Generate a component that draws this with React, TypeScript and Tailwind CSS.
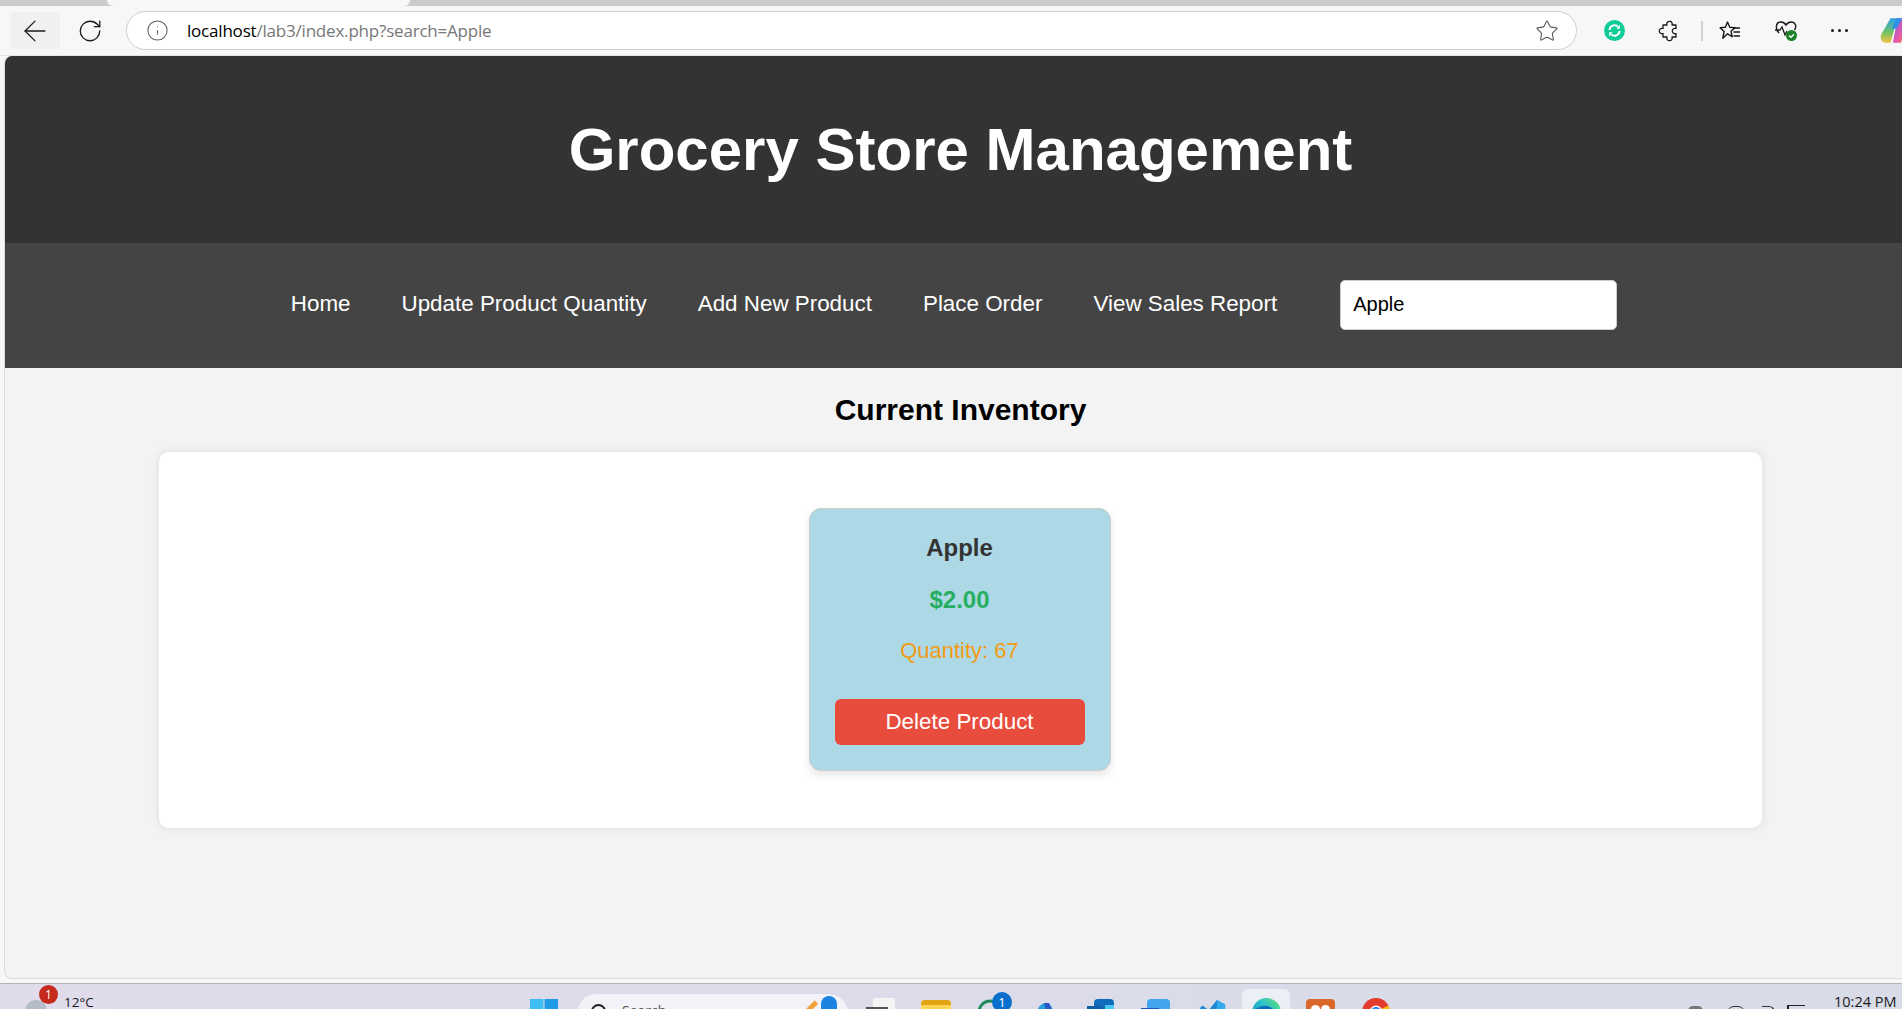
import React from "react";
import { ArrowLeft, Info, RotateCw, Star } from "lucide-react";

const navLinks = ["Home", "Update Product Quantity", "Add New Product", "Place Order", "View Sales Report"];

const BrowserBar: React.FC = () => (
  <div className="shrink-0">
    <div className="flex h-[6px] bg-[#cbcbcb]">
      <div className="ml-[107px] h-full w-[303px] rounded-b-lg bg-[#f7f7f7]" />
    </div>
    <div className="flex h-[50px] items-center border-b border-[#e4e4e4] bg-[#f7f7f7] pb-[5px] pt-[5px]">
      <div className="ml-[10px] flex h-[37px] w-[50px] shrink-0 items-center justify-center rounded bg-[#f0f0f0]">
        <ArrowLeft className="h-[34px] w-[34px] text-[#1a1a1a]" strokeWidth={0.9} />
      </div>
      <RotateCw className="ml-[17px] h-[26px] w-[26px] shrink-0 text-[#1a1a1a]" strokeWidth={1.2} />
      <div className="ml-[23px] flex h-[39px] w-[1451px] shrink-0 items-center rounded-full border border-[#cfcfcf] bg-white">
        <Info className="ml-[19px] h-[23px] w-[23px] text-[#606060]" strokeWidth={1.1} />
        <span className="ml-[18px] font-['Open_Sans',sans-serif] text-[17px] tracking-[-0.2px] text-[#777]">
          <span className="text-black">localhost</span>/lab3/index.php?search=Apple
        </span>
        <Star className="ml-auto mr-[17px] h-[24px] w-[24px] text-[#5c5c5c]" strokeWidth={1.1} />
      </div>
      <svg className="ml-[27px] shrink-0" width="21" height="21" viewBox="0 0 21 21">
        <circle cx="10.5" cy="10.5" r="10.5" fill="#0fcb97" />
        <path d="M5.5 10a5 5 0 0 1 8.2-3.6M15.5 11a5 5 0 0 1-8.2 3.6" fill="none" stroke="#fff" strokeWidth="2" />
        <path d="M12.5 9l3.6-.6-.4-3.8zM8.5 12l-3.6.6.4 3.8z" fill="#fff" />
      </svg>
      <svg className="ml-[33px] shrink-0" width="23" height="23" viewBox="0 0 23 23">
        <path
          d="M5 6H9A2.700 2.700 0 1 1 14 6H18V9.500A2.700 2.700 0 1 0 18 14.500V18H14A2.700 2.700 0 1 1 9 18H5V14.500A2.700 2.700 0 1 1 5 9.500Z"
          fill="none"
          stroke="#1a1a1a"
          strokeWidth="1.3"
          strokeLinejoin="round"
        />
      </svg>
      <div className="ml-[20px] h-[20px] w-[2px] shrink-0 bg-[#cfcfcf]" />
      <svg className="ml-[15px] shrink-0" width="24" height="22" viewBox="0 0 24 22">
        <path
          d="M9.500 2l2.300 5.200 5.200.5-4 3.600 1.200 5.400-4.700-2.900-4.700 4.500 1.300-6.800-4-3.800 5.300-.5z"
          fill="none"
          stroke="#1a1a1a"
          strokeWidth="1.400"
          strokeLinejoin="round"
        />
        <path d="M15 8h7M15.500 12h6.500M15.500 16h6.500" stroke="#1a1a1a" strokeWidth="1.300" />
      </svg>
      <svg className="ml-[32px] shrink-0" width="24" height="24" viewBox="0 0 24 24">
        <path
          d="M5 14C1 10 1.500 3 7 3c2.500 0 4 1.500 5 3 1-1.500 2.500-3 5-3 4.500 0 6 4.500 3.500 8"
          fill="none"
          stroke="#1a1a1a"
          strokeWidth="1.400"
        />
        <path d="M1 11h5l2-3 3 8 2-4" fill="none" stroke="#1a1a1a" strokeWidth="1.300" />
        <circle cx="17.500" cy="16.500" r="5.500" fill="#1d7f26" />
        <path d="M15 16.500l2 1.800 3-3" fill="none" stroke="#fff" strokeWidth="1.400" />
      </svg>
      <div className="ml-[33px] flex shrink-0 gap-[4px]">
        <span className="h-[3px] w-[3px] rounded-full bg-[#1a1a1a]" />
        <span className="h-[3px] w-[3px] rounded-full bg-[#1a1a1a]" />
        <span className="h-[3px] w-[3px] rounded-full bg-[#1a1a1a]" />
      </div>
      <svg className="ml-[32px] shrink-0" width="28" height="28" viewBox="0 0 24 24">
        <defs>
          <linearGradient id="copilotA" x1="0" y1="0" x2="0" y2="1">
            <stop offset="0" stopColor="#2aa0e8" />
            <stop offset="0.55" stopColor="#6cc36a" />
            <stop offset="1" stopColor="#f2c23e" />
          </linearGradient>
          <linearGradient id="copilotB" x1="0" y1="0" x2="1" y2="1">
            <stop offset="0" stopColor="#7b5cf0" />
            <stop offset="0.6" stopColor="#e85aa8" />
            <stop offset="1" stopColor="#f57c3a" />
          </linearGradient>
        </defs>
        <path d="M9 1h6L9 22H5C1 22 0 18 1 15z" fill="url(#copilotA)" />
        <path d="M15 1h3c4 0 5 4 5 7l-5 14h-7z" fill="url(#copilotB)" />
        <path d="M14 1h5l-5 9H10z" fill="#2e8fe6" />
      </svg>
    </div>
  </div>
);

const WindowsLogo = () => (
  <svg width="28" height="28" viewBox="0 0 28 28">
    <rect x="0" y="0" width="13.500" height="13.500" fill="#3dbdf2" />
    <rect x="14.500" y="0" width="13.500" height="13.500" fill="#1f9be8" />
    <rect x="0" y="14.500" width="13.500" height="13.500" fill="#1f9be8" />
    <rect x="14.500" y="14.500" width="13.500" height="13.500" fill="#0a78d4" />
  </svg>
);

const Taskbar: React.FC = () => (
  <div className="flex h-[26px] shrink-0 overflow-hidden border-t border-[#b4b4c0] bg-gradient-to-r from-[#e0dcec] to-[#d8dbe8]">
    <div className="flex w-[530px] shrink-0">
      <div className="relative ml-[25px] mt-[16px] h-[20px] w-[22px] rounded-t-full bg-[#b4bcc8]">
        <span className="absolute left-[14px] top-[-15px] flex h-[19px] w-[19px] items-center justify-center rounded-full bg-[#c42b1c] font-['Open_Sans',sans-serif] text-[12px] text-white">
          1
        </span>
      </div>
      <span className="ml-[17px] mt-[11px] font-['Open_Sans',sans-serif] text-[13.5px] leading-[14px] text-[#1a1a1a]">12°C</span>
    </div>
    <div className="mt-[15px]">
      <WindowsLogo />
    </div>
    <div className="relative ml-[19px] mt-[10px] h-[40px] w-[271px] rounded-full bg-[#f2f2f8]">
      <span className="absolute left-[14px] top-[10px] h-[15px] w-[15px] rounded-full border-2 border-[#222]" />
      <span className="absolute left-[45px] top-[8px] font-['Open_Sans',sans-serif] text-[14px] leading-[18px] text-[#555]">Search</span>
      <span className="absolute left-[232px] top-[6px] h-[14px] w-[5px] rotate-45 bg-[#f2a23c]" />
      <span className="absolute left-[244px] top-[2px] h-[20px] w-[16px] rounded-t-full bg-[#1b84e0]" />
    </div>
    <div className="relative ml-[25px] mt-[14px] h-[20px] w-[22px] shrink-0 bg-[#f4f4f4]">
      <span className="absolute left-[-7px] top-[9px] h-[8px] w-[22px] bg-[#555]" />
    </div>
    <div className="ml-[26px] mt-[16px] h-[20px] w-[30px] shrink-0 rounded-t-sm bg-gradient-to-b from-[#e0a412] from-[25%] to-[#fcd353] to-[25%]" />
    <svg className="ml-[26px] mt-[8px] shrink-0" width="38" height="30" viewBox="0 0 38 30">
      <circle cx="13" cy="20" r="11" fill="none" stroke="#1f8a5b" strokeWidth="3" />
      <circle cx="25" cy="10" r="10" fill="#0a6fcb" />
      <text x="25" y="14.500" textAnchor="middle" fontSize="13" fill="#fff" fontFamily="Open Sans">1</text>
    </svg>
    <svg className="ml-[18px] mt-[17px] shrink-0" width="27" height="24" viewBox="0 0 30 26">
      <path d="M2 24C2 10 8 2 14 2c5 0 8 4 10 14H10z" fill="#2a9fe0" />
      <path d="M12 2h6l4 12h-6z" fill="#2a56c8" />
      <circle cx="23" cy="14" r="5" fill="#a66ad8" />
    </svg>
    <div className="relative ml-[27px] mt-[15px] h-[20px] w-[27px] shrink-0">
      <div className="absolute left-[7px] top-0 h-[20px] w-[20px] rounded-t-sm bg-[#0f6cbd]" />
      <div className="absolute left-[18px] top-[6px] h-[20px] w-[9px] bg-[#49c5f1]" />
      <div className="absolute left-0 top-[7px] h-[20px] w-[15px] bg-[#0f5fa8]" />
    </div>
    <div className="relative ml-[27px] mt-[15px] h-[20px] w-[29px] shrink-0">
      <div className="absolute left-[6px] top-0 h-[20px] w-[23px] rounded-t-sm bg-[#41a5ee]" />
      <div className="absolute left-0 top-[9px] h-[20px] w-[18px] bg-[#185abd]" />
    </div>
    <svg className="ml-[27px] mt-[14px] shrink-0" width="29" height="24" viewBox="0 0 32 24">
      <path d="M22 1l9 5v18H22V12L9 24l-8-5 6-5-4-4 3-3 7 5z" fill="#1e88d8" />
      <path d="M22 1l9 5v18H22z" fill="#37a9ee" />
    </svg>
    <div className="ml-[16px] mt-[5px] flex h-[40px] w-[48px] shrink-0 justify-center rounded-md bg-[#edeff6] pt-[9px]">
      <svg width="29" height="29" viewBox="0 0 30 30">
        <defs>
          <linearGradient id="edgeRing" x1="0" y1="1" x2="1" y2="0">
            <stop offset="0" stopColor="#0f78c8" />
            <stop offset="0.6" stopColor="#2cc4c8" />
            <stop offset="1" stopColor="#6ee06a" />
          </linearGradient>
        </defs>
        <circle cx="15" cy="15" r="15" fill="url(#edgeRing)" />
        <ellipse cx="13" cy="17" rx="11" ry="9" fill="#0f6cb8" />
      </svg>
    </div>
    <div className="relative ml-[16px] mt-[15px] h-[20px] w-[29px] shrink-0 rounded-t-sm bg-[#d9682a]">
      <span className="absolute left-[5px] top-[6px] h-[9px] w-[9px] rounded-full bg-white" />
      <span className="absolute left-[15px] top-[6px] h-[9px] w-[9px] rounded-full bg-white" />
    </div>
    <svg className="ml-[27px] mt-[14px] shrink-0" width="28" height="28" viewBox="0 0 30 30">
      <circle cx="15" cy="15" r="15" fill="#e33b2e" />
      <path d="M15 15L2 23a15 15 0 0 0 13 7z" fill="#2fa84f" />
      <path d="M15 15l13-7a15 15 0 0 1 2 7 15 15 0 0 1-8 13z" fill="#fbc116" />
      <circle cx="15" cy="15" r="7" fill="#fff" />
      <circle cx="15" cy="15" r="5.500" fill="#3f86ee" />
    </svg>
    <span className="ml-[298px] mt-[22px] h-[10px] w-[15px] shrink-0 rounded-full bg-[#777]" />
    <span className="ml-[24px] mt-[22px] h-[14px] w-[18px] shrink-0 rounded-full border border-[#333]" />
    <span className="ml-[17px] mt-[22px] h-[6px] w-[13px] shrink-0 rounded-tr-full border-r border-t border-[#333]" />
    <span className="ml-[12px] mt-[21px] h-[6px] w-[18px] shrink-0 border-l-2 border-t border-[#222]" />
    <span className="ml-[29px] mt-[11px] whitespace-nowrap font-['Open_Sans',sans-serif] text-[14.5px] leading-[14px] text-[#1a1a1a]">10:24 PM</span>
  </div>
);

export default function App() {
  return (
    <div className="flex h-screen w-full flex-col overflow-hidden bg-[#f7f7f7] font-['Liberation_Sans',Arial,sans-serif]">
      <BrowserBar />
      <div className="flex min-h-0 flex-1 overflow-hidden pb-[4px] pl-[4px]">
        <div className="flex w-[1912px] shrink-0 flex-col overflow-hidden rounded-l-lg border-b border-l border-[#dcdcdc] bg-[#f3f3f3]">
          <header className="flex h-[187px] shrink-0 items-center justify-center bg-[#333] text-white">
            <h1 className="text-[60px] font-bold leading-none">Grocery Store Management</h1>
          </header>
          <nav className="flex h-[125px] shrink-0 items-center justify-center gap-[51px] bg-[#444] pb-[2px] pr-[13px] text-white">
            {navLinks.map((link) => (
              <a key={link} className="text-[22.4px] leading-none">
                {link}
              </a>
            ))}
            <input
              readOnly
              value="Apple"
              className="ml-[12px] h-[50px] w-[277px] rounded-[5px] border border-[#ccc] bg-white px-[12px] text-[20px] text-black outline-none"
            />
          </nav>
          <main className="flex flex-col items-center">
            <h2 className="mt-[24px] h-[60px] text-[30px] font-bold leading-[36px] text-black">Current Inventory</h2>
            <section className="flex h-[376px] w-[1603px] justify-center rounded-[10px] bg-white pr-[2px] pt-[56px] shadow-[0_0_10px_rgba(0,0,0,0.1)]">
              <div className="flex h-[263px] w-[302px] flex-col items-center rounded-[12px] border border-[#ccc] bg-[#add8e6] shadow-[0_4px_8px_rgba(0,0,0,0.1)]">
                <h3 className="mt-[25px] text-[24px] font-bold leading-[28px] text-[#333]">Apple</h3>
                <p className="mt-[25px] text-[24px] font-bold leading-[26px] text-[#27ae60]">$2.00</p>
                <p className="mt-[25px] text-[22px] leading-[26px] text-[#f39c12]">Quantity: 67</p>
                <button className="mt-[35px] h-[46px] w-[250px] rounded-[6px] bg-[#e74c3c] text-[22.4px] text-white">
                  Delete Product
                </button>
              </div>
            </section>
          </main>
        </div>
      </div>
      <Taskbar />
    </div>
  );
}
